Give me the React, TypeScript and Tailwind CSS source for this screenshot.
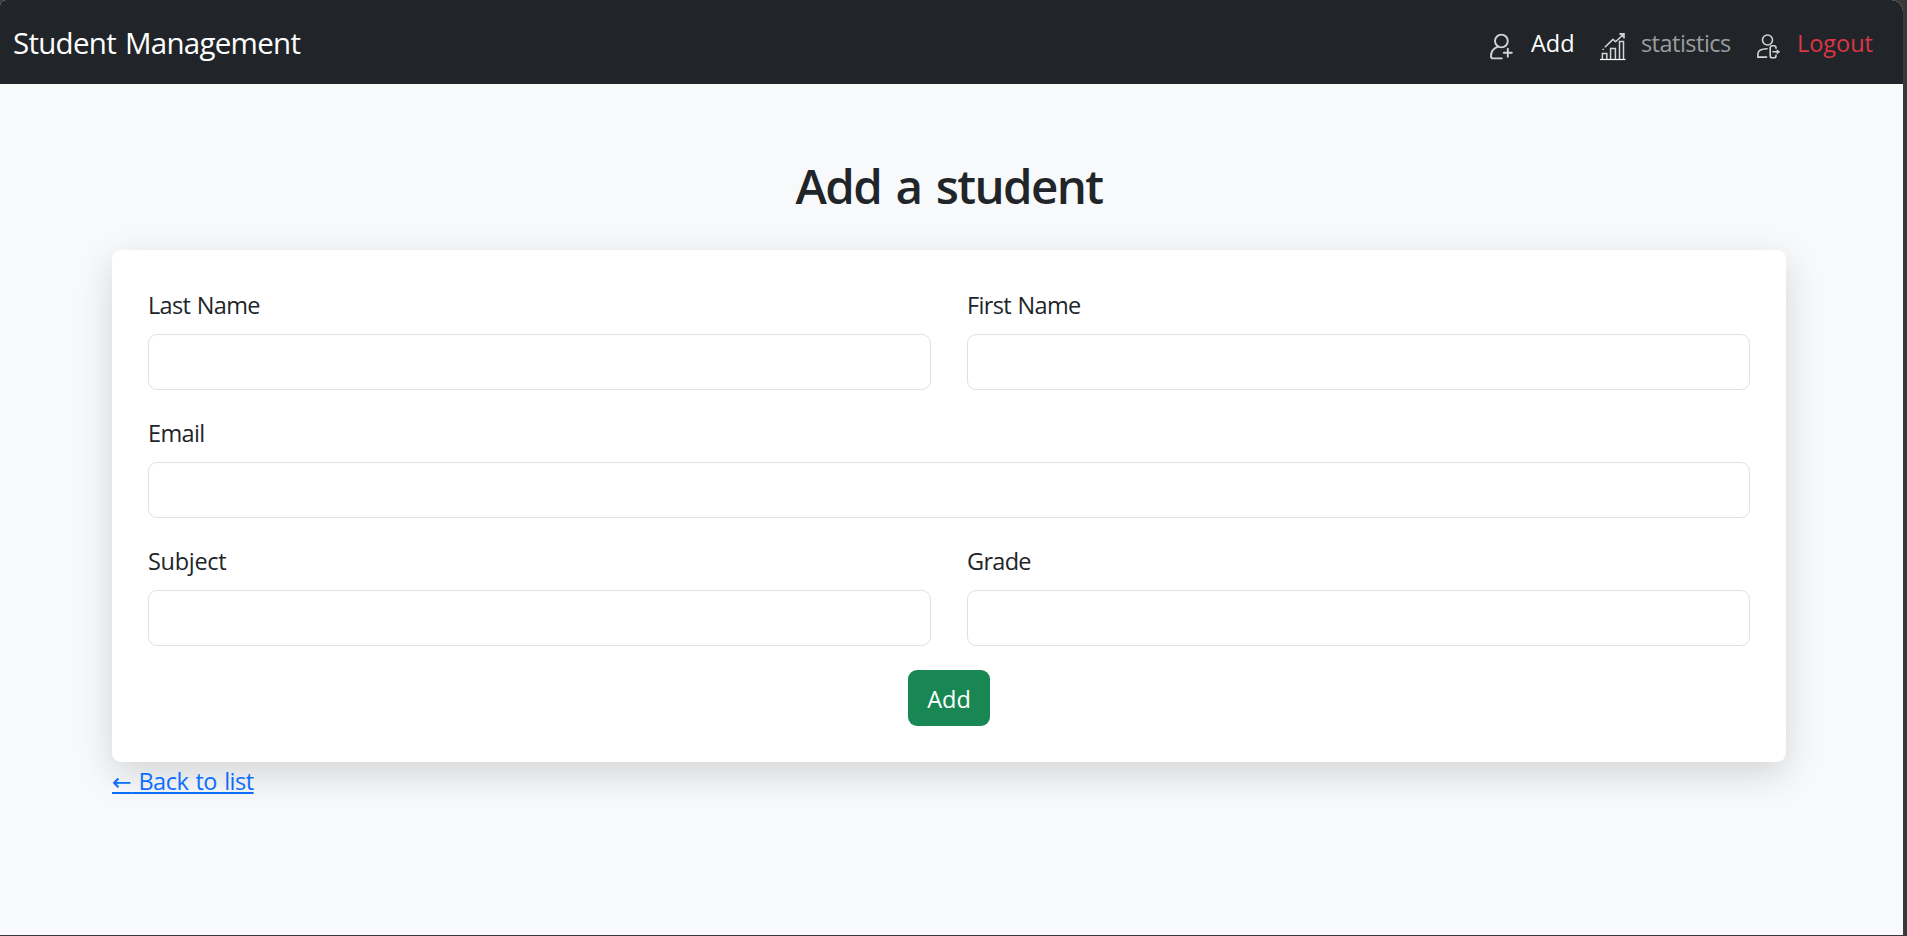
import React from "react";

function AddUserIcon() {
  return (
    <svg width="26" height="28" viewBox="0 0 26 28" fill="none" stroke="#d3d4d5" strokeWidth="1.9" strokeLinecap="round">
      <circle cx="12.4" cy="8" r="6.4" />
      <path d="M9 13.6C4.6 15.2 2 19.2 2 23.2c0 1.4.8 2.2 2.2 2.2h8.6" />
      <path d="M18.8 15.8v8M14.8 19.8h8" strokeWidth="1.9" />
    </svg>
  );
}

function StatsIcon() {
  return (
    <svg width="26" height="28" viewBox="0 0 26 28" fill="none" stroke="#d3d4d5" strokeWidth="1.5">
      <path d="M0 26.5h25.5" strokeWidth="1.2" stroke="#fff" />
      <path d="M2.4 26v-5.6h4.4V26M10.6 26V15.6h4.8V26M19.5 26V8.6h4V26" />
      <path d="M4.8 14.2 13 6.4l2.6 2.4 6.8-6.6" strokeLinejoin="round" />
      <path d="M19.4.9h4.6v4.6M21.2 1.4l2.4 2.6" strokeWidth="1.6" />
      <circle cx="3.2" cy="16.4" r=".8" fill="#d3d4d5" stroke="none" />
    </svg>
  );
}

function LogoutIcon() {
  return (
    <svg width="26" height="28" viewBox="0 0 26 28" fill="none" stroke="#d3d4d5" strokeWidth="1.6" strokeLinecap="round">
      <circle cx="11.5" cy="7" r="5" />
      <path d="M10.6 24.1H1.9v-3.4c0-3.2 3-4.8 9.1-5" />
      <path d="M20 15.2v-.4c0-1.4-.7-2.1-2.1-2.1h-1.6c-1.4 0-2.1.7-2.1 2.1v7.9c0 1.4.7 2.1 2.1 2.1h1.6c1.4 0 2.1-.7 2.1-2.1v-.4" />
      <path d="M17 18.8h4.6" />
      <path d="m20.6 16.2 3.6 2.6-3.6 2.6z" fill="#d3d4d5" stroke="none" />
    </svg>
  );
}

type FieldProps = { label: string; name: string; className?: string; labelClass?: string };

function Field({ label, name, className = "", labelClass = "tracking-[-0.65px] [word-spacing:1px]" }: FieldProps) {
  return (
    <div className={className}>
      <label htmlFor={name} className={`mb-3 block w-fit pt-0.5 leading-[34px] ${labelClass}`}>
        {label}
      </label>
      <input id={name} name={name} className="block h-14 w-full rounded-[9px] border border-[#dee2e6] bg-white px-[18px] outline-none" />
    </div>
  );
}

export default function App() {
  return (
    <div className="h-[936px] w-full overflow-hidden bg-[#3a3838] pr-1 pb-px font-['Open_Sans',sans-serif] text-[23.5px] text-[#212529]">
      <div className="h-full overflow-hidden rounded-tl-[6px] rounded-tr-[12px] bg-[#f8f9fa]">
        <nav className="flex h-[84px] items-start justify-between bg-[#212529] pr-[30px] pl-[13px]">
          <a className="pt-5 text-[29.5px] leading-[45px] tracking-[-0.72px] [word-spacing:2px] text-white">Student Management</a>
          <div className="flex items-start pt-[25px] leading-9">
            <a className="flex items-start text-white">
              <span className="mt-2 mr-4"><AddUserIcon /></span>
              <span className="w-[69px]">Add</span>
            </a>
            <a className="flex items-start text-[#9b9d9e]">
              <span className="mt-2 mr-[15px]"><StatsIcon /></span>
              <span className="w-[115px] tracking-[-0.5px]">statistics</span>
            </a>
            <a className="flex items-start text-[#dc3545]">
              <span className="mt-2 mr-[15px]"><LogoutIcon /></span>
              <span>Logout</span>
            </a>
          </div>
        </nav>
        <main className="ml-[112px] w-[1674px] pt-[73px]">
          <h1 className="mb-[35px] text-center text-[47.5px] leading-[58px] font-semibold tracking-[-1.6px] [word-spacing:3.5px]">Add a student</h1>
          <form className="grid grid-cols-2 gap-x-9 gap-y-6 rounded-[9px] bg-white p-9 shadow-[0_12px_36px_rgba(0,0,0,0.15)]">
            <Field label="Last Name" name="lastName" />
            <Field label="First Name" name="firstName" />
            <Field label="Email" name="email" className="col-span-2" />
            <Field label="Subject" name="subject" labelClass="tracking-[-0.3px]" />
            <Field label="Grade" name="grade" labelClass="tracking-[-0.7px]" />
            <div className="col-span-2 flex justify-center">
              <button type="button" className="h-14 w-[82px] rounded-[9px] bg-[#198754] pt-0.5 leading-[34px] text-white">Add</button>
            </div>
          </form>
          <a className="block h-9 w-fit pt-0.5 leading-[34px] tracking-[-0.5px] [word-spacing:1.6px] text-[#0d6efd] underline decoration-2 underline-offset-2">
            <span className="font-['DejaVu_Sans',sans-serif] leading-none">←</span> Back to list
          </a>
        </main>
      </div>
    </div>
  );
}
